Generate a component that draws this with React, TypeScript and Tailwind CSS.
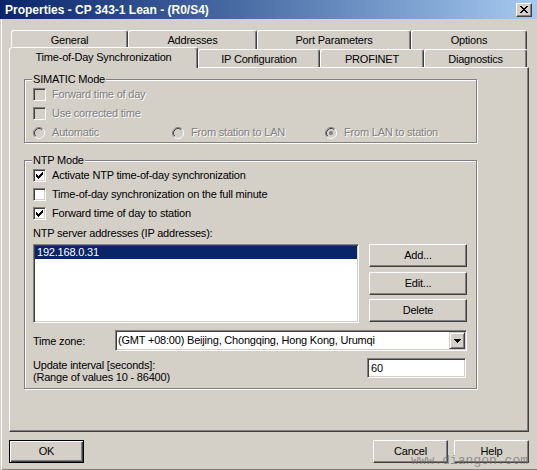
import React from "react";

// win2000 classic bevels
const raised =
  "border border-t-white border-l-white border-r-[#404040] border-b-[#404040] shadow-[inset_-1px_-1px_0_#808080]";
const sunken =
  "border border-t-[#808080] border-l-[#808080] border-r-white border-b-white shadow-[inset_1px_1px_0_#404040,inset_-1px_-1px_0_#d4d0c8]";
const etched =
  "border border-[#808080] shadow-[inset_1px_1px_0_#fff,1px_1px_0_#fff]";
const grayed = "text-[#808080] [text-shadow:1px_1px_0_#fff]";

function CheckMark() {
  const cols = [2, 3, 4, 3, 2, 1, 0];
  return (
    <svg width="7" height="7" viewBox="0 0 7 7" shapeRendering="crispEdges">
      {cols.map((y, x) => (
        <rect key={x} x={x} y={y} width="1" height="3" fill="#000" />
      ))}
    </svg>
  );
}

function CheckBox({
  label,
  checked = false,
  disabled = false,
}: {
  label: string;
  checked?: boolean;
  disabled?: boolean;
}) {
  return (
    <div className="flex h-[19px] items-center pl-[8px]">
      <span
        className={`flex h-[13px] w-[13px] shrink-0 items-center justify-center ${sunken} ${
          disabled ? "bg-[#d4d0c8]" : "bg-white"
        }`}
      >
        {checked && <CheckMark />}
      </span>
      <span className={`ml-[6px] leading-[13px] whitespace-nowrap ${disabled ? grayed : ""}`}>
        {label}
      </span>
    </div>
  );
}

function Radio({ label, on = false, w }: { label: string; on?: boolean; w: string }) {
  return (
    <div className={`flex items-center ${w}`}>
      <svg width="12" height="12" viewBox="0 0 12 12" className="shrink-0">
        <circle cx="6" cy="6" r="4.5" fill="#d4d0c8" />
        <path d="M2.11 9.89A5.5 5.5 0 0 1 9.89 2.11" stroke="#808080" fill="none" />
        <path d="M9.89 2.11A5.5 5.5 0 0 1 2.11 9.89" stroke="#fff" fill="none" />
        <path d="M2.82 9.18A4.5 4.5 0 0 1 9.18 2.82" stroke="#404040" fill="none" />
        <path d="M9.18 2.82A4.5 4.5 0 0 1 2.82 9.18" stroke="#d4d0c8" fill="none" />
        {on && <circle cx="6" cy="6" r="2" fill="#808080" />}
      </svg>
      <span className={`ml-[7px] leading-[13px] whitespace-nowrap ${grayed}`}>{label}</span>
    </div>
  );
}

function Tab({
  label,
  w,
  h,
  selected = false,
}: {
  label: string;
  w: string;
  h: string;
  selected?: boolean;
}) {
  return (
    <div
      className={`${w} ${h} shrink-0 rounded-t-[3px] border-t border-l border-r border-t-white border-l-white border-r-[#404040] bg-[#d4d0c8] pt-[3px] text-center leading-[13px] whitespace-nowrap shadow-[inset_-1px_0_0_#808080] ${
        selected ? "relative z-10 -mb-px" : ""
      }`}
    >
      {label}
    </div>
  );
}

function Button({ label, w, def = false }: { label: string; w: string; def?: boolean }) {
  return (
    <div
      className={`${w} flex h-[23px] shrink-0 items-center justify-center bg-[#d4d0c8] ${
        def
          ? "border border-black shadow-[inset_1px_1px_0_#fff,inset_-1px_-1px_0_#404040,inset_-2px_-2px_0_#808080]"
          : raised
      }`}
    >
      {label}
    </div>
  );
}

function Group({ title, h, children }: { title: string; h: string; children: React.ReactNode }) {
  return (
    <div className={`relative w-[453px] ${h} ${etched}`}>
      <span className="absolute -top-[7px] left-[7px] bg-[#d4d0c8] px-px leading-[13px]">
        {title}
      </span>
      {children}
    </div>
  );
}

export default function App() {
  return (
    <div className="relative flex h-[470px] w-[537px] flex-col overflow-hidden bg-[#d4d0c8] font-['Liberation_Sans',Arial,sans-serif] text-[11px] tracking-[-0.2px] text-black shadow-[inset_1px_0_0_#d4d0c8,inset_2px_0_0_#fff,inset_0_-1px_0_#808080]">
      {/* title bar */}
      <div className="flex h-[19px] shrink-0 items-center justify-between bg-linear-to-r from-[#0a246a] to-[#a6caf0] pl-[5px] pr-[5px]">
        <span className="text-[12px] font-bold tracking-normal text-white">
          Properties - CP 343-1 Lean - (R0/S4)
        </span>
        <div className={`flex h-[14px] w-[16px] items-center justify-center bg-[#d4d0c8] ${raised}`}>
          <svg width="8" height="7" viewBox="0 0 8 7" shapeRendering="crispEdges">
            <path
              d="M0 0h2v1h-2zM6 0h2v1h-2zM1 1h2v1h-2zM5 1h2v1h-2zM2 2h4v1h-4zM3 3h2v1h-2zM2 4h4v1h-4zM1 5h2v1h-2zM5 5h2v1h-2zM0 6h2v1h-2zM6 6h2v1h-2z"
              fill="#000"
            />
          </svg>
        </div>
      </div>

      {/* tabs */}
      <div className="mt-[11px] flex h-[19px] shrink-0 pl-[11px]">
        <Tab label="General" w="w-[117px]" h="h-[19px]" />
        <Tab label="Addresses" w="w-[129px]" h="h-[19px]" />
        <Tab label="Port Parameters" w="w-[154px]" h="h-[19px]" />
        <Tab label="Options" w="w-[116px]" h="h-[19px]" />
      </div>
      <div className="flex h-[18px] shrink-0 items-end pl-[9px]">
        <Tab label="Time-of-Day Synchronization" w="w-[189px]" h="h-[21px]" selected />
        <Tab label="IP Configuration" w="w-[122px]" h="h-[18px]" />
        <Tab label="PROFINET" w="w-[104px]" h="h-[18px]" />
        <Tab label="Diagnostics" w="w-[103px]" h="h-[18px]" />
      </div>

      {/* page */}
      <div className="ml-[9px] h-[365px] w-[520px] shrink-0 border-t border-l border-r border-b border-t-white border-l-white border-r-[#404040] border-b-[#404040] pt-[11px] pl-[14px] shadow-[inset_-1px_-1px_0_#808080]">
        <Group title="SIMATIC Mode" h="h-[64px]">
          <div className="pt-[5px]">
            <CheckBox label="Forward time of day" disabled />
            <CheckBox label="Use corrected time" disabled />
            <div className="flex h-[19px] items-center pl-[8px]">
              <Radio label="Automatic" w="w-[139px]" />
              <Radio label="From station to LAN" w="w-[153px]" />
              <Radio label="From LAN to station" w="w-[140px]" on />
            </div>
          </div>
        </Group>

        <div className="mt-[17px]">
          <Group title="NTP Mode" h="h-[229px]">
            <div className="pt-[5px]">
              <CheckBox label="Activate NTP time-of-day synchronization" checked />
              <CheckBox label="Time-of-day synchronization on the full minute" />
              <CheckBox label="Forward time of day to station" checked />
              <div className="flex h-[20px] items-center pl-[8px] leading-[13px]">
                NTP server addresses (IP addresses):
              </div>

              <div className="mt-px flex items-start pl-[8px]">
                <div className={`h-[79px] w-[326px] bg-white ${sunken} p-px`}>
                  <div className="h-[13px] bg-[#0a246a] pl-[2px] leading-[13px] text-white">
                    192.168.0.31
                  </div>
                </div>
                <div className="ml-[10px] flex flex-col">
                  <Button label="Add..." w="w-[98px]" />
                  <div className="mt-[5px]">
                    <Button label="Edit..." w="w-[98px]" />
                  </div>
                  <div className="mt-[4px]">
                    <Button label="Delete" w="w-[98px]" />
                  </div>
                </div>
              </div>

              <div className="mt-[7px] flex h-[21px] items-center pl-[8px]">
                <span className="w-[82px] pt-[2px] leading-[13px]">Time zone:</span>
                <div className={`flex h-[21px] w-[352px] items-center bg-white ${sunken} p-px`}>
                  <span className="flex-1 pl-px leading-[13px] whitespace-nowrap">
                    (GMT +08:00) Beijing, Chongqing, Hong Kong, Urumqi
                  </span>
                  <div
                    className={`flex h-[17px] w-[16px] items-center justify-center bg-[#d4d0c8] border border-t-[#d4d0c8] border-l-[#d4d0c8] border-r-[#404040] border-b-[#404040] shadow-[inset_1px_1px_0_#fff,inset_-1px_-1px_0_#808080]`}
                  >
                    <svg width="7" height="4" viewBox="0 0 7 4" shapeRendering="crispEdges">
                      <path d="M0 0h7v1h-1v1h-1v1h-1v1h-1v-1h-1v-1h-1v-1h-1z" fill="#000" />
                    </svg>
                  </div>
                </div>
              </div>

              <div className="mt-[7px] flex items-start pl-[8px]">
                <div className="mt-px w-[334px] leading-[12px]">
                  <div>Update interval [seconds]:</div>
                  <div>(Range of values 10 - 86400)</div>
                </div>
                <div className={`flex h-[20px] w-[99px] items-center bg-white pl-[3px] ${sunken}`}>
                  <span className="leading-[13px]">60</span>
                </div>
              </div>
            </div>
          </Group>
        </div>
      </div>

      {/* dialog buttons */}
      <div className="mt-[8px] flex shrink-0 items-center pl-[9px] pr-[8px]">
        <Button label="OK" w="w-[75px]" def />
        <div className="flex-1" />
        <Button label="Cancel" w="w-[75px]" />
        <div className="ml-[6px]">
          <Button label="Help" w="w-[75px]" />
        </div>
      </div>

      <span className="pointer-events-none absolute left-[411px] top-[451px] font-['Liberation_Mono',monospace] text-[13px] tracking-normal text-[#6e6e6e]/70">
        www.diangon.com
      </span>
    </div>
  );
}
